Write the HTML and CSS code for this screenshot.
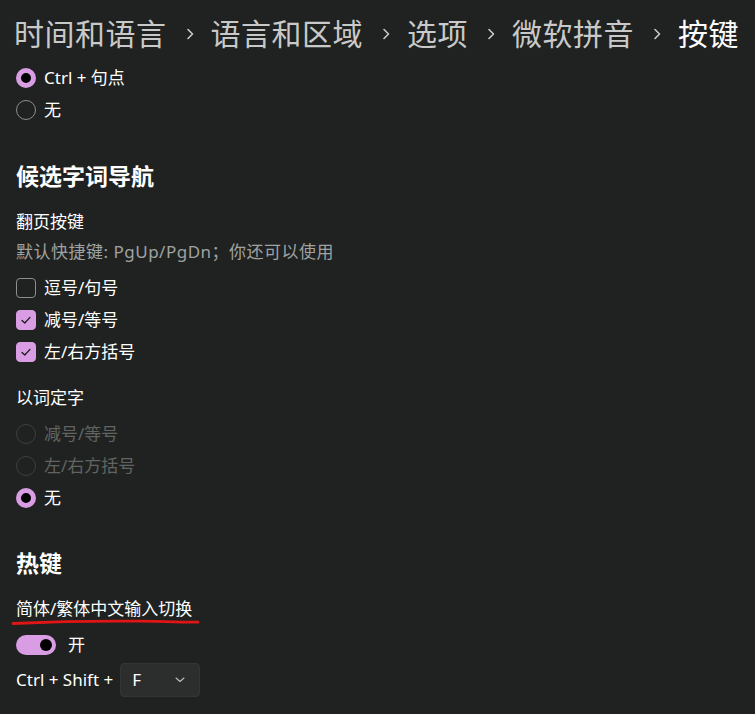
FILE: index.html
```html
<!DOCTYPE html>
<html lang="zh-CN">
<head>
<meta charset="utf-8">
<link rel="stylesheet" href="styles.css">
</head>
<body>
<div class="page">
  <nav class="crumbs">
    <span class="crumb">时间和语言</span>
    <svg class="chev" viewBox="0 0 10 12" width="10" height="12"><path d="M3 1.5 L7.5 6 L3 10.5" fill="none" stroke="#c9c9c9" stroke-width="1.6" stroke-linecap="round" stroke-linejoin="round"/></svg>
    <span class="crumb">语言和区域</span>
    <svg class="chev" viewBox="0 0 10 12" width="10" height="12"><path d="M3 1.5 L7.5 6 L3 10.5" fill="none" stroke="#c9c9c9" stroke-width="1.6" stroke-linecap="round" stroke-linejoin="round"/></svg>
    <span class="crumb">选项</span>
    <svg class="chev" viewBox="0 0 10 12" width="10" height="12"><path d="M3 1.5 L7.5 6 L3 10.5" fill="none" stroke="#c9c9c9" stroke-width="1.6" stroke-linecap="round" stroke-linejoin="round"/></svg>
    <span class="crumb">微软拼音</span>
    <svg class="chev" viewBox="0 0 10 12" width="10" height="12"><path d="M3 1.5 L7.5 6 L3 10.5" fill="none" stroke="#c9c9c9" stroke-width="1.6" stroke-linecap="round" stroke-linejoin="round"/></svg>
    <span class="crumb current">按键</span>
  </nav>

  <div class="row"><span class="radio on"></span><span>Ctrl + 句点</span></div>
  <div class="row"><span class="radio"></span><span>无</span></div>

  <h2 class="heading h-nav">候选字词导航</h2>
  <div class="label l-page">翻页按键</div>
  <div class="desc">默认快捷键: PgUp/PgDn；你还可以使用</div>
  <div class="row r-first"><span class="check"></span><span>逗号/句号</span></div>
  <div class="row"><span class="check on"><svg viewBox="0 0 20 20" width="20" height="20"><path d="M6 10.4 L8.8 13 L14 7.4" fill="none" stroke="#1b1b1b" stroke-width="1.3" stroke-linecap="round" stroke-linejoin="round"/></svg></span><span>减号/等号</span></div>
  <div class="row"><span class="check on"><svg viewBox="0 0 20 20" width="20" height="20"><path d="M6 10.4 L8.8 13 L14 7.4" fill="none" stroke="#1b1b1b" stroke-width="1.3" stroke-linecap="round" stroke-linejoin="round"/></svg></span><span>左/右方括号</span></div>

  <div class="label l-word">以词定字</div>
  <div class="row r-first disabled"><span class="radio off"></span><span>减号/等号</span></div>
  <div class="row disabled"><span class="radio off"></span><span>左/右方括号</span></div>
  <div class="row"><span class="radio on"></span><span>无</span></div>

  <h2 class="heading h-hot">热键</h2>
  <div class="label l-switch"><span class="marked">简体/繁体中文输入切换<svg class="scribble" viewBox="0 0 192 10" width="192" height="10"><path d="M3 6.5 C 40 4.8, 90 3.8, 130 4.2 C 160 4.6, 178 5.4, 188 5.2" fill="none" stroke="#e01515" stroke-width="2.8" stroke-linecap="round"/></svg></span></div>
  <div class="row r-toggle"><span class="toggle"><span class="knob"></span></span><span class="toggle-text">开</span></div>
  <div class="row r-key">
    <span>Ctrl + Shift +</span>
    <div class="select"><span>F</span><svg viewBox="0 0 10 6" width="10" height="6"><path d="M1 1 L5 4.5 L9 1" fill="none" stroke="#bdbdbd" stroke-width="1.1" stroke-linecap="round" stroke-linejoin="round"/></svg></div>
  </div>
</div>
</body>
</html>
```

FILE: styles.css
```css
html, body {
  margin: 0;
  padding: 0;
  background: #1f2220;
}
body {
  color: #ffffff;
  font-family: "Noto Sans", "Noto Sans CJK SC", sans-serif;
  font-size: 17px;
}
.page {
  padding: 0 0 0 16px;
  height: 714px;
  overflow: hidden;
}
.crumbs {
  display: flex;
  align-items: center;
  height: 62px;
  padding-top: 6px;
  box-sizing: border-box;
  margin-left: -2px;
}
.crumb {
  font-size: 30px;
  color: #c9c9c9;
  line-height: 40px;
  letter-spacing: 0.5px;
}
.crumb.current {
  color: #ffffff;
}
.chev {
  margin: 0 16px 0 18px;
  flex: none;
}
.row {
  display: flex;
  align-items: center;
  height: 32px;
  gap: 8px;
  line-height: 24px;
}
.radio {
  width: 20px;
  height: 20px;
  box-sizing: border-box;
  border-radius: 50%;
  border: 1px solid #8c8e8d;
  flex: none;
}
.radio.on {
  border: 5px solid #d99de3;
  background: #000000;
}
.radio.off {
  border-color: #3d403e;
}
.disabled {
  color: #616462;
}
.heading {
  margin: 34px 0 0;
  font-size: 23px;
  font-weight: 600;
  line-height: 32px;
}
.h-hot {
  margin-top: 33px;
}
.label {
  line-height: 24px;
}
.l-page {
  margin-top: 18px;
}
.desc {
  margin-top: 6px;
  line-height: 24px;
  color: #a0a2a1;
  letter-spacing: 0.5px;
}
.r-first {
  margin-top: 8px;
}
.check {
  width: 20px;
  height: 20px;
  box-sizing: border-box;
  border-radius: 4px;
  border: 1px solid #8c8e8d;
  flex: none;
  display: flex;
}
.check.on {
  background: #d99de3;
  border-color: #d99de3;
}
.check.on svg {
  margin: -1px;
}
.l-word {
  margin-top: 18px;
}
.l-switch {
  margin-top: 18px;
}
.marked {
  position: relative;
}
.scribble {
  position: absolute;
  left: -6px;
  top: 20px;
}
.r-toggle {
  margin-top: 8px;
  gap: 12px;
}
.toggle {
  width: 40px;
  height: 20px;
  border-radius: 10px;
  background: #d99de3;
  display: flex;
  align-items: center;
  justify-content: flex-end;
  padding-right: 4px;
  box-sizing: border-box;
  flex: none;
}
.knob {
  width: 12px;
  height: 12px;
  border-radius: 50%;
  background: #000000;
}
.r-key {
  height: 34px;
  margin-top: 2px;
  gap: 7px;
}
.select {
  width: 80px;
  height: 34px;
  box-sizing: border-box;
  background: #2c2e2d;
  border: 1px solid #333534;
  border-radius: 4px;
  display: flex;
  align-items: center;
  justify-content: space-between;
  padding: 0 14px 0 11px;
}
```
